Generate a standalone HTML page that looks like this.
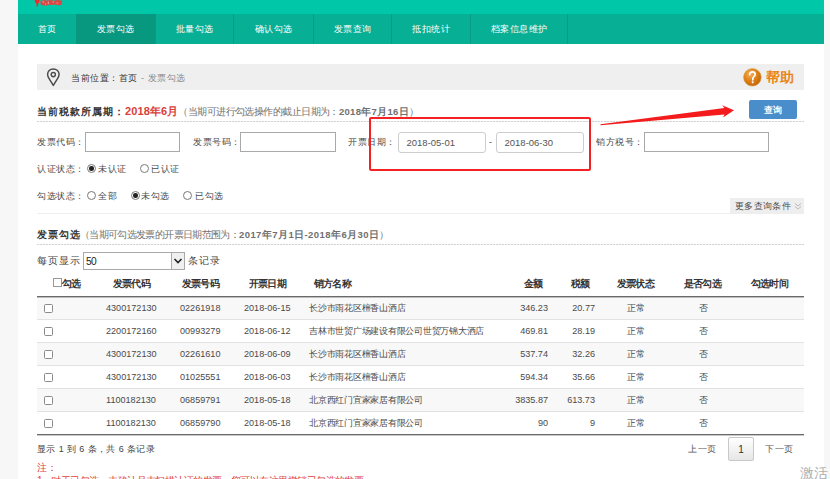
<!DOCTYPE html>
<html><head><meta charset="utf-8">
<style>
*{margin:0;padding:0;box-sizing:border-box}
html,body{width:830px;height:479px;overflow:hidden;background:#fff}
body{position:relative;font-family:"Liberation Sans",sans-serif;color:#555;font-size:10px}
.a{position:absolute;white-space:nowrap}
.strip{background:#f7f7f7}
#top{left:18px;top:0;width:806px;height:14px;background:#01c7a9}
#nav{left:18px;top:14px;width:806px;height:30px;background:#07af95}
.ni{position:absolute;top:0;height:30px;line-height:30px;color:#fff;text-align:center;font-size:9px;letter-spacing:0.5px;border-right:1px solid #099c84}
.ni.on{background:#08977f}
#crumb{left:37px;top:64px;width:767px;height:26px;background:#efefef}
.dash{height:1px;background:repeating-linear-gradient(90deg,#d2d2d2 0 2px,#f4f4f4 2px 3px)}
.lbl{font-size:9px;letter-spacing:0.5px;color:#4a4a4a;line-height:12px}
.inp{border:1px solid #a9a9a9;background:#fff}
.dinp{border:1px solid #cdcdcd;border-radius:3px;background:#fff;font-size:9.5px;color:#555;padding-left:7.5px;line-height:19px}
.radio{position:absolute;width:9px;height:9px;border:1px solid #7a7a7a;border-radius:50%;background:#fff}
.radio.on::after{content:"";position:absolute;left:1.25px;top:1.25px;width:4.5px;height:4.5px;border-radius:50%;background:#222}
.th{font-weight:bold;color:#333;font-size:10px;letter-spacing:-0.8px;line-height:12px}
.td{font-size:9.1px;color:#4a4a4a;line-height:12px}
.tn{font-size:9px;letter-spacing:-0.25px;color:#4a4a4a;line-height:12px}
.row{position:absolute;left:37px;width:767px;height:23px;border-bottom:1px solid #e4e4e4}
.cb{position:absolute;width:9px;height:9px;border:1px solid #8a8a8a;border-radius:1.5px;background:#fff}
</style></head><body>
<div class="a strip" style="left:0;top:0;width:18px;height:479px"></div>
<div class="a strip" style="left:824px;top:0;width:6px;height:479px"></div>
<div class="a" id="top"></div>
<!-- logo -->
<svg class="a" style="left:33px;top:0" width="32" height="9" viewBox="0 0 32 9">
<path d="M1.6 0 H6.6 C6.6 1.8 5.8 3 5.1 3.6 L4.9 6.8 H3.7 L3.4 3.6 C2.6 3 1.6 1.8 1.6 0Z" fill="#f22a2a"/>
<path d="M7.4 1.2 L10.5 0 L14 0.6 L17.5 0 L21 0.8 L24 0 L28.6 0.4 L29.2 2.6 L28.4 5 L25 5.2 L22 4.6 L19 5 L15.5 4.8 L13 5.8 L10 5.2 L7.6 4.8 Z" fill="#ec3d3d" opacity=".92"/>
<path d="M9.5 1.3 h1.5 v1.2 h-1.5z M14.8 1.8 h1.2 v2 h-1.2z M19.5 1.5 h1.5 v1 h-1.5z M23.6 2.6 h1.6 v1 h-1.6z M12 3.4 h1.2 v1 h-1.2z" fill="#f4b0b0" opacity=".8"/>
</svg>
<div class="a" id="nav">
 <div class="ni" style="left:0;width:58px;border-right:none">首页</div>
 <div class="ni on" style="left:58px;width:80px">发票勾选</div>
 <div class="ni" style="left:138px;width:78px">批量勾选</div>
 <div class="ni" style="left:216px;width:80px">确认勾选</div>
 <div class="ni" style="left:296px;width:78px">发票查询</div>
 <div class="ni" style="left:374px;width:79px">抵扣统计</div>
 <div class="ni" style="left:453px;width:97px">档案信息维护</div>
</div>

<div class="a" id="crumb"></div>
<svg class="a" style="left:46px;top:67px" width="15" height="20" viewBox="0 0 15 20">
<path d="M7.3 1.9 C3.9 1.9 1.6 4.4 1.6 7.4 C1.6 9.2 2.4 10.6 3.4 12.2 L7.3 18.4 L11.2 12.2 C12.2 10.6 13.1 9.2 13.1 7.4 C13.1 4.4 10.7 1.9 7.3 1.9 Z" fill="none" stroke="#4a4a4a" stroke-width="1.45" stroke-linejoin="round"/>
<circle cx="7.3" cy="7.6" r="2.1" fill="none" stroke="#4a4a4a" stroke-width="1.4"/>
</svg>
<div class="a" style="left:71px;top:72px;font-size:9px;letter-spacing:0.55px;line-height:13px;color:#333">当前位置：首页 <span style="color:#8a8a8a">- 发票勾选</span></div>
<svg class="a" style="left:743px;top:68px" width="19" height="19" viewBox="0 0 19 19">
<defs><radialGradient id="hg" cx="38%" cy="32%" r="70%"><stop offset="0" stop-color="#f4b060"/><stop offset=".55" stop-color="#e08018"/><stop offset="1" stop-color="#c0650a"/></radialGradient></defs>
<circle cx="9.4" cy="9.3" r="8.8" fill="url(#hg)" stroke="#d9a040" stroke-width=".6"/>
<path d="M6.6 6.6 C6.6 4.9 7.8 3.9 9.4 3.9 C11.1 3.9 12.2 5 12.2 6.4 C12.2 8.2 10.1 8.6 9.9 10.4 L9.8 11.8" fill="none" stroke="#fff" stroke-width="1.7" stroke-linecap="round"/>
<circle cx="9.7" cy="14.3" r="1.1" fill="#fff"/>
</svg>
<div class="a" style="left:766px;top:69px;font-size:14px;line-height:17px;font-weight:bold;color:#e8861a">帮助</div>

<!-- title -->
<div class="a" style="left:37px;top:105px;font-size:10px;line-height:13px;font-weight:bold;color:#333"><span style="letter-spacing:1px">当前税款所属期：</span><span style="color:#d9403a;font-size:11px;letter-spacing:0.1px">2018年6月</span><span style="font-size:10px;letter-spacing:-0.55px;color:#707070;font-weight:normal">（当期可进行勾选操作的截止日期为：<b style="letter-spacing:0.3px;font-size:9.5px">2018年7月16日</b>）</span></div>
<div class="a" style="left:749px;top:100px;width:48px;height:19px;background:#4a8dcb;border-radius:2px;color:#fff;font-weight:bold;font-size:9px;line-height:21px;text-align:center">查询</div>
<div class="a dash" style="left:37px;top:121px;width:767px"></div>

<!-- row inputs -->
<div class="a lbl" style="left:37px;top:136px">发票代码：</div>
<div class="a inp" style="left:85px;top:132px;width:95px;height:20px"></div>
<div class="a lbl" style="left:193px;top:136px">发票号码：</div>
<div class="a inp" style="left:240px;top:132px;width:96px;height:20px"></div>
<div class="a lbl" style="left:348px;top:136px">开票日期：</div>
<div class="a dinp" style="left:398px;top:132px;width:88px;height:21px">2018-05-01</div>
<div class="a lbl" style="left:489px;top:136px">-</div>
<div class="a dinp" style="left:496px;top:132px;width:88px;height:21px">2018-06-30</div>
<div class="a lbl" style="left:596px;top:136px">销方税号：</div>
<div class="a inp" style="left:644px;top:132px;width:125px;height:20px"></div>
<div class="a" style="left:369px;top:117px;width:222px;height:54px;border:2px solid #f42222;border-radius:2px"></div>
<!-- arrow -->
<svg class="a" style="left:590px;top:100px" width="150" height="30" viewBox="0 0 150 30">
<path d="M10.5 24.3 L134.5 7.9 L132.1 5.2 L144 10.3 L133.1 17.6 L134.5 14.6 L10.5 25.3 Z" fill="#f31b1b"/>
</svg>

<!-- radios -->
<div class="a lbl" style="left:37px;top:163px">认证状态：</div>
<div class="radio on" style="left:87px;top:164px"></div>
<div class="a lbl" style="left:98px;top:163px">未认证</div>
<div class="radio" style="left:140px;top:164px"></div>
<div class="a lbl" style="left:151px;top:163px">已认证</div>

<div class="a lbl" style="left:37px;top:190px">勾选状态：</div>
<div class="radio" style="left:87px;top:191px"></div>
<div class="a lbl" style="left:98px;top:190px">全部</div>
<div class="radio on" style="left:131px;top:191px"></div>
<div class="a lbl" style="left:141px;top:190px">未勾选</div>
<div class="radio" style="left:183px;top:191px"></div>
<div class="a lbl" style="left:195px;top:190px">已勾选</div>

<div class="a" style="left:37px;top:213px;width:767px;height:1px;background:#eee"></div>
<div class="a" style="left:730px;top:198px;width:74px;height:15px;background:#eee"></div>
<div class="a" style="left:735px;top:200px;font-size:9px;letter-spacing:0.35px;line-height:12px;color:#4a4a4a">更多查询条件</div><svg class="a" style="left:794px;top:202px" width="8" height="9" viewBox="0 0 8 9"><path d="M1 1.5 L4 4 L7 1.5 M1 4.5 L4 7 L7 4.5" fill="none" stroke="#b5b5b5" stroke-width="0.9"/></svg>

<div class="a" style="left:37px;top:228px;font-size:10px;line-height:13px;font-weight:bold;color:#333"><span style="letter-spacing:1px">发票勾选</span><span style="font-size:10px;letter-spacing:-0.65px;color:#707070;font-weight:normal;margin-left:-1px">（当期可勾选发票的开票日期范围为：<b style="letter-spacing:0.43px;font-size:9.5px">2017年7月1日-2018年6月30日</b>）</span></div>
<div class="a dash" style="left:37px;top:244px;width:767px"></div>

<div class="a" style="left:37px;top:254px;font-size:10px;letter-spacing:1px;line-height:13px;color:#444">每页显示</div>
<div class="a" style="left:83px;top:252px;width:102px;height:18px;border:1px solid #a9a9a9;background:#fff;font-size:10.2px;letter-spacing:-0.7px;line-height:18px;padding-left:2px;color:#222">50</div>
<div class="a" style="left:171px;top:253px;width:13px;height:16px;background:#f0f0f0;border-left:1px solid #aaa"></div>
<svg class="a" style="left:173px;top:257px" width="10" height="8" viewBox="0 0 10 8"><path d="M1.5 2 L5 5.5 L8.5 2" fill="none" stroke="#222" stroke-width="1.6"/></svg>
<div class="a" style="left:188px;top:254px;font-size:10px;letter-spacing:1px;line-height:13px;color:#444">条记录</div>

<!-- table header -->
<div class="cb" style="left:53px;top:278px;width:9px;height:9px;border-radius:0;border-color:#999"></div>
<div class="a th" style="left:62px;top:278px">勾选</div>
<div class="a th" style="left:113px;top:278px">发票代码</div>
<div class="a th" style="left:182px;top:278px">发票号码</div>
<div class="a th" style="left:249px;top:278px">开票日期</div>
<div class="a th" style="left:314px;top:278px">销方名称</div>
<div class="a th" style="left:524px;top:278px">金额</div>
<div class="a th" style="left:571px;top:278px">税额</div>
<div class="a th" style="left:617px;top:278px">发票状态</div>
<div class="a th" style="left:684px;top:278px">是否勾选</div>
<div class="a th" style="left:751px;top:278px">勾选时间</div>
<div class="a" style="left:37px;top:296px;width:767px;height:1px;background:#6a6a6a;z-index:2"></div><div class="a" style="left:37px;top:297px;width:767px;height:1px;background:#bdbdbd;z-index:2"></div>

<div id="rows">
<div class="a" style="left:37px;top:297px;width:767px;height:23px;background:#f8f8f8;border-bottom:1px solid #e2e2e2;">
 <div class="cb" style="left:7px;top:7px"></div>
 <div class="a td" style="left:69px;top:5px">4300172130</div>
 <div class="a td" style="left:143px;top:5px">02261918</div>
 <div class="a td" style="left:207px;top:5px">2018-06-15</div>
 <div class="a tn" style="left:272px;top:5px">长沙市雨花区檀香山酒店</div>
 <div class="a td" style="right:256px;top:5px;text-align:right">346.23</div>
 <div class="a td" style="right:209px;top:5px;text-align:right">20.77</div>
 <div class="a tn" style="left:590px;top:5px">正常</div>
 <div class="a tn" style="left:662px;top:5px">否</div>
</div>
<div class="a" style="left:37px;top:320px;width:767px;height:23px;background:#fff;border-bottom:1px solid #e2e2e2;">
 <div class="cb" style="left:7px;top:7px"></div>
 <div class="a td" style="left:69px;top:5px">2200172160</div>
 <div class="a td" style="left:143px;top:5px">00993279</div>
 <div class="a td" style="left:207px;top:5px">2018-06-12</div>
 <div class="a tn" style="left:272px;top:5px">吉林市世贸广场建设有限公司世贸万锦大酒店</div>
 <div class="a td" style="right:256px;top:5px;text-align:right">469.81</div>
 <div class="a td" style="right:209px;top:5px;text-align:right">28.19</div>
 <div class="a tn" style="left:590px;top:5px">正常</div>
 <div class="a tn" style="left:662px;top:5px">否</div>
</div>
<div class="a" style="left:37px;top:343px;width:767px;height:23px;background:#f8f8f8;border-bottom:1px solid #e2e2e2;">
 <div class="cb" style="left:7px;top:7px"></div>
 <div class="a td" style="left:69px;top:5px">4300172130</div>
 <div class="a td" style="left:143px;top:5px">02261610</div>
 <div class="a td" style="left:207px;top:5px">2018-06-09</div>
 <div class="a tn" style="left:272px;top:5px">长沙市雨花区檀香山酒店</div>
 <div class="a td" style="right:256px;top:5px;text-align:right">537.74</div>
 <div class="a td" style="right:209px;top:5px;text-align:right">32.26</div>
 <div class="a tn" style="left:590px;top:5px">正常</div>
 <div class="a tn" style="left:662px;top:5px">否</div>
</div>
<div class="a" style="left:37px;top:366px;width:767px;height:23px;background:#fff;border-bottom:1px solid #e2e2e2;">
 <div class="cb" style="left:7px;top:7px"></div>
 <div class="a td" style="left:69px;top:5px">4300172130</div>
 <div class="a td" style="left:143px;top:5px">01025551</div>
 <div class="a td" style="left:207px;top:5px">2018-06-03</div>
 <div class="a tn" style="left:272px;top:5px">长沙市雨花区檀香山酒店</div>
 <div class="a td" style="right:256px;top:5px;text-align:right">594.34</div>
 <div class="a td" style="right:209px;top:5px;text-align:right">35.66</div>
 <div class="a tn" style="left:590px;top:5px">正常</div>
 <div class="a tn" style="left:662px;top:5px">否</div>
</div>
<div class="a" style="left:37px;top:389px;width:767px;height:23px;background:#f8f8f8;border-bottom:1px solid #e2e2e2;">
 <div class="cb" style="left:7px;top:7px"></div>
 <div class="a td" style="left:69px;top:5px">1100182130</div>
 <div class="a td" style="left:143px;top:5px">06859791</div>
 <div class="a td" style="left:207px;top:5px">2018-05-18</div>
 <div class="a tn" style="left:272px;top:5px">北京西红门宜家家居有限公司</div>
 <div class="a td" style="right:256px;top:5px;text-align:right">3835.87</div>
 <div class="a td" style="right:209px;top:5px;text-align:right">613.73</div>
 <div class="a tn" style="left:590px;top:5px">正常</div>
 <div class="a tn" style="left:662px;top:5px">否</div>
</div>
<div class="a" style="left:37px;top:412px;width:767px;height:22px;background:#fff;">
 <div class="cb" style="left:7px;top:7px"></div>
 <div class="a td" style="left:69px;top:5px">1100182130</div>
 <div class="a td" style="left:143px;top:5px">06859790</div>
 <div class="a td" style="left:207px;top:5px">2018-05-18</div>
 <div class="a tn" style="left:272px;top:5px">北京西红门宜家家居有限公司</div>
 <div class="a td" style="right:256px;top:5px;text-align:right">90</div>
 <div class="a td" style="right:209px;top:5px;text-align:right">9</div>
 <div class="a tn" style="left:590px;top:5px">正常</div>
 <div class="a tn" style="left:662px;top:5px">否</div>
</div>
<div class="a" style="left:37px;top:434px;width:767px;height:1px;background:#6a6a6a;z-index:2"></div><div class="a" style="left:37px;top:435px;width:767px;height:1px;background:#c8c8c8;z-index:2"></div>
<div class="a" style="left:37px;top:443px;font-size:9px;letter-spacing:0.4px;line-height:13px;color:#444">显示 1 到 6 条，共 6 条记录</div>
<div class="a" style="left:37px;top:461px;font-size:10px;letter-spacing:-0.4px;line-height:13px;color:#e0403a">注：</div>
<div class="a" style="left:37px;top:474px;font-size:10px;letter-spacing:-0.55px;line-height:13px;color:#e0403a">1、对于已勾选，未确认且未扫描认证的发票，您可以在这里撤销已勾选的发票。</div>
<div class="a" style="left:688px;top:443px;font-size:9px;letter-spacing:0.55px;line-height:13px;color:#555">上一页</div>
<div class="a" style="left:728px;top:437px;width:26px;height:24px;border:1px solid #c8c8c8;border-radius:2px;background:linear-gradient(#fff,#e6e6e6);font-size:10px;line-height:23px;text-align:center;color:#333">1</div>
<div class="a" style="left:765px;top:443px;font-size:9px;letter-spacing:0.55px;line-height:13px;color:#555">下一页</div>
<div class="a" style="left:800px;top:465px;font-size:14px;line-height:17px;color:#b0b0b0">激活</div>
</div>
</body></html>
